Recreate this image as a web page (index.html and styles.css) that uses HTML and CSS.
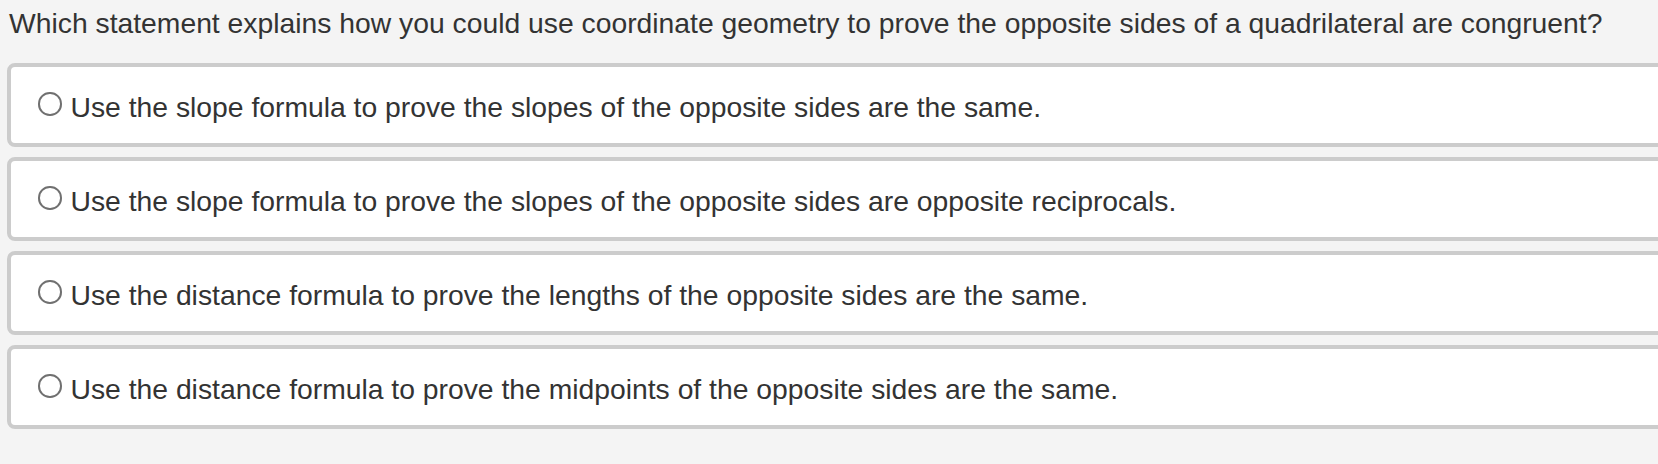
FILE: index.html
```html
<!DOCTYPE html>
<html>
<head>
<meta charset="utf-8">
<link rel="stylesheet" href="styles.css">
</head>
<body>
<div class="page">
  <div class="question">Which statement explains how you could use coordinate geometry to prove the opposite sides of a quadrilateral are congruent?</div>
  <div class="options">
    <label class="option"><span class="radio"></span><span class="label">Use the slope formula to prove the slopes of the opposite sides are the same.</span></label>
    <label class="option"><span class="radio"></span><span class="label">Use the slope formula to prove the slopes of the opposite sides are opposite reciprocals.</span></label>
    <label class="option"><span class="radio"></span><span class="label">Use the distance formula to prove the lengths of the opposite sides are the same.</span></label>
    <label class="option"><span class="radio"></span><span class="label">Use the distance formula to prove the midpoints of the opposite sides are the same.</span></label>
  </div>
</div>
</body>
</html>
```
FILE: styles.css
```css
html, body {
  margin: 0;
  padding: 0;
  background: #f4f4f4;
  overflow: hidden;
}
.page {
  font-family: "Liberation Sans", Arial, Helvetica, sans-serif;
  color: #333333;
  padding: 5px 0 0 9px;
}
.question {
  font-size: 28.3px;
  line-height: 36px;
  white-space: nowrap;
}
.options {
  margin-top: 22px;
  margin-left: -2px;
  margin-right: -40px;
  display: flex;
  flex-direction: column;
  gap: 10.5px;
}
.option {
  display: flex;
  align-items: center;
  height: 75.5px;
  border: 4px solid #cccccc;
  border-radius: 8px;
  background: #ffffff;
  padding-left: 27px;
  font-size: 28.3px;
}
.radio {
  width: 19.5px;
  height: 19.5px;
  border: 2px solid #707070;
  border-radius: 50%;
  background: #fff;
  flex: none;
  margin-top: -2px;
}
.label {
  margin-left: 9px;
  margin-top: 6px;
  white-space: nowrap;
}
```
